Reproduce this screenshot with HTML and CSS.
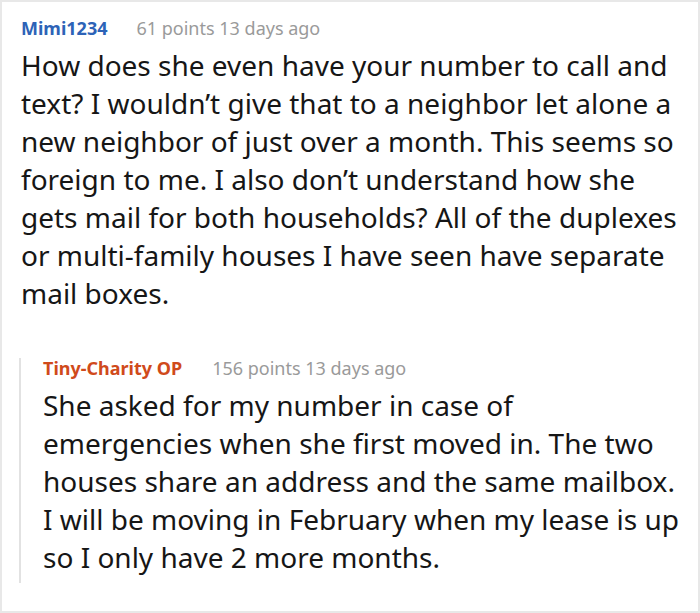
FILE: index.html
```html
<!DOCTYPE html>
<html>
<head>
<meta charset="utf-8">
<link rel="stylesheet" href="styles.css">
</head>
<body>
<div class="box">
  <div class="comment">
    <div class="meta"><span class="user">Mimi1234</span><span class="info">61 points 13 days ago</span></div>
    <p class="text">How does she even have your number to call and<br>text? I wouldn’t give that to a neighbor let alone a<br>new neighbor of just over a month. This seems so<br>foreign to me. I also don’t understand how she<br>gets mail for both households? All of the duplexes<br>or multi-family houses I have seen have separate<br>mail boxes.</p>
    <div class="reply">
      <div class="meta"><span class="user op">Tiny-Charity OP</span><span class="info">156 points 13 days ago</span></div>
      <p class="text">She asked for my number in case of<br>emergencies when she first moved in. The two<br>houses share an address and the same mailbox.<br>I will be moving in February when my lease is up<br>so I only have 2 more months.</p>
    </div>
  </div>
</div>
</body>
</html>
```
FILE: styles.css
```css
html, body { margin: 0; padding: 0; background: #fff; }
body { font-family: "Noto Sans", sans-serif; color: #161616; }
.box {
  width: 700px;
  height: 613px;
  box-sizing: border-box;
  border: 2px solid #e8e8e8;
  padding: 16px 0 0 19px;
  overflow: hidden;
}
.meta {
  display: flex;
  align-items: baseline;
  height: 20px;
  line-height: 20px;
  margin-bottom: 8px;
  white-space: nowrap;
}
.user { font-weight: bold; font-size: 18px; color: #2d63b7; margin-right: 29px; }
.user.op { color: #d04a1b; margin-right: 30px; }
.info { font-size: 18px; color: #9a9a9a; }
.text {
  margin: 0;
  font-size: 28px;
  line-height: 38px;
  white-space: nowrap;
}
.reply {
  margin: 46px 0 0 -2px;
  border-left: 2px solid #e2e2e2;
  padding: 0 0 7px 22px;
}
```
